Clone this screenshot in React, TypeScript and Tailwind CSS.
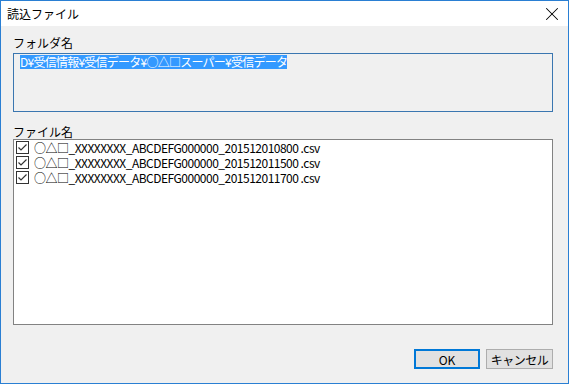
import {X} from "lucide-react"

const FILES = [
  "○△□_XXXXXXXX_ABCDEFG000000_201512010800 .csv",
  "○△□_XXXXXXXX_ABCDEFG000000_201512011500 .csv",
  "○△□_XXXXXXXX_ABCDEFG000000_201512011700 .csv",
]

const FONT = {fontFamily: '"Noto Sans CJK JP", "Liberation Sans", sans-serif'}

export default function App() {
  return (
    <div
      className="w-[569px] h-[384px] border border-[#2a7fd3] bg-[#f0f0f0] flex flex-col text-[12px] leading-[15px] text-black overflow-hidden"
      style={FONT}
    >
      <TitleBar />

      <div className="flex flex-col pl-[12px] pr-[15px]">
        <div className="mt-[9px]">フォルダ名</div>

        <div className="mt-[3px] h-[59px] border border-[#3a76b0] bg-[#f0f0f0] pl-[6px]">
          <span className="inline-block bg-[#3399ff] text-white leading-[14px] h-[14px] tracking-[-0.75px]">
            D¥受信情報¥受信データ¥○△□スーパー¥受信データ
          </span>
        </div>

        <div className="mt-[12px]">ファイル名</div>

        <div className="h-[186px] border border-[#828282] bg-white">
          {FILES.map((name) => (
            <FileRow key={name} name={name} />
          ))}
        </div>

        <div className="mt-[24px] flex justify-end gap-[6px]">
          <button className="w-[66px] h-[20px] border border-[#0078d7] bg-[#e1e1e1] outline outline-1 outline-[#0078d7] -outline-offset-2 leading-[15px]">
            OK
          </button>
          <button className="w-[67px] h-[20px] border border-[#adadad] bg-[#e1e1e1] leading-[15px] tracking-[-0.5px]">
            キャンセル
          </button>
        </div>
      </div>
    </div>
  )
}

function TitleBar() {
  return (
    <div className="h-[25px] bg-white flex items-center justify-between pl-[6px] pr-[5px]">
      <span className="text-[12px]">読込ファイル</span>
      <X size={22} strokeWidth={1.1} className="text-black" />
    </div>
  )
}

function FileRow(props: {name: string}) {
  return (
    <div className="h-[15px] flex items-center pl-[2px]">
      <CheckBox />
      <span className="ml-[5px] tracking-[-0.5px]">{props.name}</span>
    </div>
  )
}

function CheckBox() {
  return (
    <svg width="13" height="13" viewBox="0 0 13 13" className="shrink-0">
      <rect x="0.5" y="0.5" width="12" height="12" fill="white" stroke="#333" />
      <path d="M2.5 6.5 L5 9 L10.5 3.5" fill="none" stroke="#333" strokeWidth="1.2" />
    </svg>
  )
}
